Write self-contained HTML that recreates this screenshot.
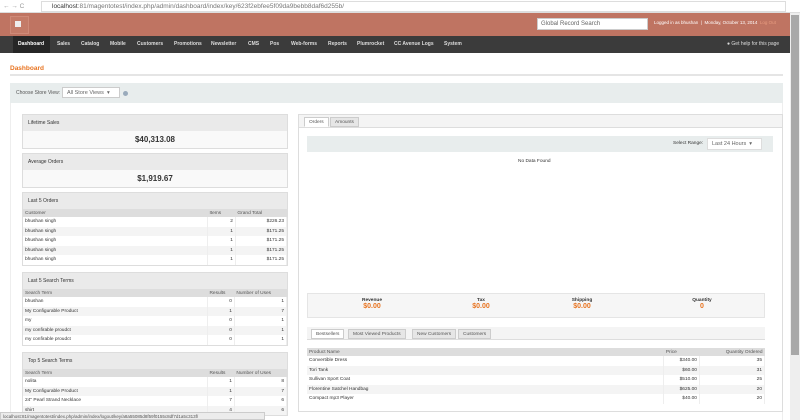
<!DOCTYPE html>
<html><head><style>
*{margin:0;padding:0;box-sizing:border-box}
body{width:800px;height:420px;overflow:hidden;background:#fff;font-family:"Liberation Sans",sans-serif;font-size:5px;color:#333;position:relative}
.abs{position:absolute}
.url{top:0;left:0;width:800px;height:13px;background:#fff;border-bottom:1px solid #ddd;font-size:6.5px;color:#777;line-height:13px}
.hdr{top:13px;left:0;width:790px;height:23px;background:#bf7462}
.nav{top:36px;left:0;width:790px;height:17px;background:#3b3b3b;color:#ddd;font-size:5px;font-weight:bold;line-height:17px}
.nav span{position:absolute;top:0}
.box{position:absolute;left:22px;width:266px;border:1px solid #ddd;background:#fff}
.bh{background:#eaeaea;height:16px;line-height:16px;padding-left:5px;font-size:5px}
.val{text-align:center;font-weight:bold;font-size:8px;line-height:17px;background:#f9f9f9}
table{width:100%;border-collapse:collapse;font-size:4.8px}
th{background:#ddd;text-align:left;font-weight:normal;height:8px;padding:0 2px;color:#555}
td{height:9.5px;padding:0 2px;border-right:1px solid #eee}
tr:nth-child(odd) td{background:#f4f4f4}
.r{text-align:right}
.tab{position:absolute;height:10px;line-height:10px;border:1px solid #ccc;background:#e6e6e6;padding:0 4px;font-size:4.8px;color:#555}
.tot{position:absolute;text-align:center;font-size:4.8px;font-weight:bold;width:60px}
.tot b{display:block;color:#e8731f;font-size:7px}
</style></head><body>
<div class="abs url"><span style="position:absolute;left:3px;color:#999">&#8592; &#8594; C</span><span style="position:absolute;left:41px;border:1px solid #ddd;width:745px;height:11px;top:1px;line-height:10px;padding-left:10px"><b style="color:#333;font-weight:normal">localhost</b>:81/magentotest/index.php/admin/dashboard/index/key/623f2ebfee5f09da9bebb8daf6d255b/</span></div>
<div class="abs hdr"><div class="abs" style="left:10px;top:3px;width:19px;height:18px;border:1px solid #cf8a78;background:#c47b68"><div style="margin:4px;width:6px;height:6px;background:#eee"></div></div>
<div class="abs" style="left:537px;top:5px;width:111px;height:12px;background:#fff;border:1px solid #ccc;font-size:6px;line-height:11px;padding-left:3px;color:#666">Global Record Search</div>
<div class="abs" style="left:654px;top:7px;font-size:4.5px;color:#fff">Logged in as bhushan &nbsp;| &nbsp;Monday, October 13, 2014 &nbsp;<span style="color:#e99d80">Log Out</span></div></div>
<div class="abs nav"><div class="abs" style="left:13px;top:0;width:37px;height:17px;background:#262626"></div>
<span style="left:18px;color:#fff">Dashboard</span><span style="left:57px">Sales</span><span style="left:81px">Catalog</span><span style="left:110px">Mobile</span><span style="left:137px">Customers</span><span style="left:174px">Promotions</span><span style="left:211px">Newsletter</span><span style="left:248px">CMS</span><span style="left:270px">Pos</span><span style="left:291px">Web-forms</span><span style="left:328px">Reports</span><span style="left:357px">Plumrocket</span><span style="left:394px">CC Avenue Logs</span><span style="left:444px">System</span><span style="left:727px;font-weight:normal">&#9679; Get help for this page</span></div>
<div class="abs" style="left:10px;top:65px;color:#e8731f;font-weight:bold;font-size:6.5px">Dashboard</div>
<div class="abs" style="left:10px;top:74px;width:773px;height:2px;background:#e5e5e5"></div>
<div class="abs" style="left:10px;top:83px;width:773px;height:20px;background:#e8eded;font-size:5px"><span class="abs" style="left:6px;top:7px;color:#555">Choose Store View:</span><div class="abs" style="left:52px;top:4px;width:58px;height:11px;background:#fff;border:1px solid #ccc;line-height:10px;padding-left:4px;font-size:5.5px;color:#666">All Store Views &nbsp;&#9662;</div><div class="abs" style="left:113px;top:8px;width:5px;height:5px;border-radius:50%;background:#9ab"></div></div>
<div class="abs" style="left:10px;top:103px;width:773px;height:317px;border-left:1px solid #eee;border-right:1px solid #eee"></div>
<div class="box" style="top:114px"><div class="bh">Lifetime Sales</div><div class="val">$40,313.08</div></div>
<div class="box" style="top:153px"><div class="bh">Average Orders</div><div class="val">$1,919.67</div></div>
<div class="box" style="top:192px"><div class="bh">Last 5 Orders</div><table><tr><th style="width:70%">Customer</th><th>Items</th><th>Grand Total</th></tr>
<tr><td>bhushan singh</td><td class="r">2</td><td class="r">$226.23</td></tr><tr><td>bhushan singh</td><td class="r">1</td><td class="r">$171.25</td></tr><tr><td>bhushan singh</td><td class="r">1</td><td class="r">$171.25</td></tr><tr><td>bhushan singh</td><td class="r">1</td><td class="r">$171.25</td></tr><tr><td>bhushan singh</td><td class="r">1</td><td class="r">$171.25</td></tr></table></div>
<div class="box" style="top:272px"><div class="bh">Last 5 Search Terms</div><table><tr><th style="width:70%">Search Term</th><th>Results</th><th>Number of Uses</th></tr>
<tr><td>bhushan</td><td class="r">0</td><td class="r">1</td></tr><tr><td>My Configurable Product</td><td class="r">1</td><td class="r">7</td></tr><tr><td>my</td><td class="r">0</td><td class="r">1</td></tr><tr><td>my confirable proudct</td><td class="r">0</td><td class="r">1</td></tr><tr><td>my confirable proudct</td><td class="r">0</td><td class="r">1</td></tr></table></div>
<div class="box" style="top:352px"><div class="bh">Top 5 Search Terms</div><table><tr><th style="width:70%">Search Term</th><th>Results</th><th>Number of Uses</th></tr>
<tr><td>nolita</td><td class="r">1</td><td class="r">8</td></tr><tr><td>My Configurable Product</td><td class="r">1</td><td class="r">7</td></tr><tr><td>24" Pearl Strand Necklace</td><td class="r">7</td><td class="r">6</td></tr><tr><td>shirt</td><td class="r">4</td><td class="r">6</td></tr></table></div>
<div class="abs" style="left:298px;top:114px;width:485px;height:298px;border:1px solid #ddd"></div>
<div class="abs" style="left:299px;top:115px;width:483px;height:13px;background:#f4f4f4;border-bottom:1px solid #ddd"></div>
<div class="tab" style="left:304px;top:117px;background:#fff;border-bottom-color:#fff">Orders</div><div class="tab" style="left:330px;top:117px">Amounts</div>
<div class="abs" style="left:307px;top:136px;width:466px;height:16px;background:#e8eded"><span class="abs" style="left:366px;top:5px;font-size:4.8px">Select Range:</span><div class="abs" style="left:400px;top:2px;width:55px;height:12px;background:#fff;border:1px solid #ddd;line-height:11px;padding-left:4px;font-size:5.5px;color:#666">Last 24 Hours &nbsp;&#9662;</div></div>
<div class="abs" style="left:518px;top:159px;font-size:4.8px">No Data Found</div>
<div class="abs" style="left:307px;top:293px;width:458px;height:25px;background:#f6f6f6;border:1px solid #e5e5e5"></div>
<div class="tot" style="left:342px;top:298px">Revenue<b>$0.00</b></div><div class="tot" style="left:451px;top:298px">Tax<b>$0.00</b></div><div class="tot" style="left:552px;top:298px">Shipping<b>$0.00</b></div><div class="tot" style="left:672px;top:298px">Quantity<b>0</b></div>
<div class="abs" style="left:307px;top:327px;width:458px;height:13px;background:#f4f4f4;border-bottom:1px solid #ddd"></div>
<div class="tab" style="left:311px;top:329px;background:#fff">Bestsellers</div><div class="tab" style="left:348px;top:329px">Most Viewed Products</div><div class="tab" style="left:412px;top:329px">New Customers</div><div class="tab" style="left:458px;top:329px">Customers</div>
<div class="abs" style="left:307px;top:348px;width:458px"><table><tr><th style="width:78%">Product Name</th><th>Price</th><th class="r">Quantity Ordered</th></tr>
<tr><td>Convertible Dress</td><td class="r">$340.00</td><td class="r">35</td></tr><tr><td>Tori Tank</td><td class="r">$60.00</td><td class="r">31</td></tr><tr><td>Sullivan Sport Coat</td><td class="r">$510.00</td><td class="r">25</td></tr><tr><td>Florentine Satchel Handbag</td><td class="r">$625.00</td><td class="r">20</td></tr><tr><td>Compact mp3 Player</td><td class="r">$40.00</td><td class="r">20</td></tr></table></div>
<div class="abs" style="left:790px;top:13px;width:10px;height:407px;background:#eee"><div style="margin:2px 1px;height:340px;background:#a8a8a8"></div></div>
<div class="abs" style="left:0;top:412px;width:265px;height:8px;background:#ececec;border:1px solid #ccc;font-size:4.5px;color:#555;line-height:7px;padding-left:2px">localhost:81/magentotest/index.php/admin/index/logout/key/a8a55085d8f59f0155c8df7d1a5c313f/</div>
</body></html>
